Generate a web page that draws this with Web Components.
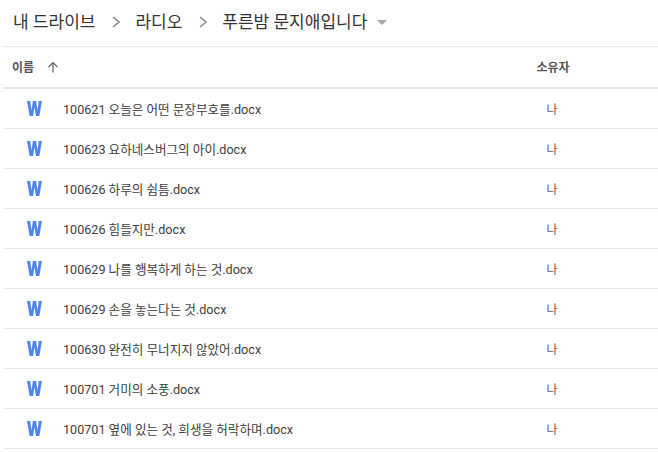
<!DOCTYPE html>
<html lang="ko">
<head>
<meta charset="utf-8">
<title>푸른밤 문지애입니다</title>
<style>
  html, body { margin: 0; background: #ffffff; }
  body { font-family: Roboto, "Noto Sans CJK KR", sans-serif; width: 658px; height: 452px; overflow: hidden; }
</style>
</head>
<body>
<drive-page>
  <drive-breadcrumb>
    <span>내 드라이브</span>
    <span>라디오</span>
    <span>푸른밤 문지애입니다</span>
  </drive-breadcrumb>
  <drive-header></drive-header>
  <drive-row name="100621 오늘은 어떤 문장부호를.docx" owner="나"></drive-row>
  <drive-row name="100623 요하네스버그의 아이.docx" owner="나"></drive-row>
  <drive-row name="100626 하루의 쉼틈.docx" owner="나"></drive-row>
  <drive-row name="100626 힘들지만.docx" owner="나"></drive-row>
  <drive-row name="100629 나를 행복하게 하는 것.docx" owner="나"></drive-row>
  <drive-row name="100629 손을 놓는다는 것.docx" owner="나"></drive-row>
  <drive-row name="100630 완전히 무너지지 않았어.docx" owner="나"></drive-row>
  <drive-row name="100701 거미의 소풍.docx" owner="나"></drive-row>
  <drive-row name="100701 옆에 있는 것, 희생을 허락하며.docx" owner="나"></drive-row>
</drive-page>

<script>
class DrivePage extends HTMLElement {
  constructor() {
    super();
    this.attachShadow( {mode: 'open'} );
    this.shadowRoot.innerHTML = `
      <style>
        :host {
          box-sizing: border-box;
          display: flex;
          flex-direction: column;
          padding: 0 0 0 3px;
          width: 658px;
        }
      </style>
      <slot></slot>
    `;
  }
}

class DriveBreadcrumb extends HTMLElement {
  constructor() {
    super();
    this.attachShadow( {mode: 'open'} );
    this.shadowRoot.innerHTML = `
      <style>
        :host {
          align-items: center;
          border-bottom: 1px solid #e8e8e8;
          box-sizing: border-box;
          color: #333333;
          display: flex;
          font-size: 17px;
          height: 47px;
          padding: 0 0 5px 10px;
        }

        svg {
          flex: none;
          margin: 3px 0 0 0;
        }

        .sep {
          margin-left: 17px;
          margin-right: 15px;
        }

        .caret {
          margin-left: 10px;
        }
      </style>
      <slot name="a"></slot>
      <svg class="sep" width="8" height="12" viewBox="0 0 8 12"><path d="M1 1l6 5-6 5" fill="none" stroke="#8a8a8a" stroke-width="1.6"/></svg>
      <slot name="b"></slot>
      <svg class="sep" width="8" height="12" viewBox="0 0 8 12"><path d="M1 1l6 5-6 5" fill="none" stroke="#8a8a8a" stroke-width="1.6"/></svg>
      <slot name="c"></slot>
      <svg class="caret" width="10" height="5" viewBox="0 0 10 5"><path d="M0 0h10L5 5z" fill="#a8a8a8"/></svg>
    `;
  }

  connectedCallback() {
    [...this.children].forEach( ( child, index ) => {
      child.slot = ['a', 'b', 'c'][index];
    } );
  }
}

class DriveHeader extends HTMLElement {
  constructor() {
    super();
    this.attachShadow( {mode: 'open'} );
    this.shadowRoot.innerHTML = `
      <style>
        :host {
          align-items: center;
          border-bottom: 2px solid #e6e6ea;
          box-sizing: border-box;
          color: #555555;
          display: flex;
          font-size: 12px;
          font-weight: 700;
          height: 42px;
          padding: 0 0 1px 9px;
        }

        svg {
          margin-left: 13px;
        }

        .owner {
          margin-left: auto;
          text-align: center;
          width: 210px;
        }
      </style>
      <span>이름</span>
      <svg width="12" height="12" viewBox="0 0 12 12"><path d="M6 11.5V1.500M1.500 6L6 1.500 10.500 6" fill="none" stroke="#666666" stroke-width="1.200"/></svg>
      <span class="owner">소유자</span>
    `;
  }
}

class DriveRow extends HTMLElement {
  constructor() {
    super();
    this.attachShadow( {mode: 'open'} );
    this.shadowRoot.innerHTML = `
      <style>
        :host {
          align-items: center;
          border-bottom: 1px solid #e8e8e8;
          box-sizing: border-box;
          color: #404040;
          display: flex;
          font-size: 12.6px;
          height: 40px;
          padding: 0 0 0 24px;
        }

        svg {
          flex: none;
          margin-right: 21px;
        }

        .owner {
          color: #85584a;
          font-size: 12px;
          margin-left: auto;
          text-align: center;
          width: 208px;
          padding-right: 2px;
          box-sizing: content-box;
        }
      </style>
      <svg width="15" height="15" viewBox="0 0 15 15"><path d="M0 0h3.200l1.300 9.500L6 0h3l1.500 9.500L11.800 0H15l-2.700 15H9L7.500 6 6 15H2.700z" fill="#4a86e8"/></svg>
      <span class="name"></span>
      <span class="owner"></span>
    `;
    this.$name = this.shadowRoot.querySelector( '.name' );
    this.$owner = this.shadowRoot.querySelector( '.owner' );
  }

  connectedCallback() {
    this.$name.textContent = this.getAttribute( 'name' );
    this.$owner.textContent = this.getAttribute( 'owner' );
  }
}

window.customElements.define( 'drive-page', DrivePage );
window.customElements.define( 'drive-breadcrumb', DriveBreadcrumb );
window.customElements.define( 'drive-header', DriveHeader );
window.customElements.define( 'drive-row', DriveRow );
</script>
</body>
</html>
